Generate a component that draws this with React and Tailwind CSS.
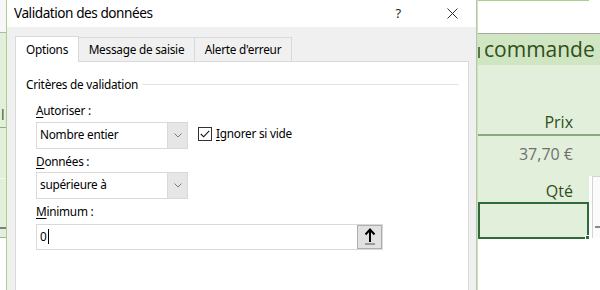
import React from 'react';

const ui = { fontFamily: '"Noto Sans", "Open Sans", sans-serif' };
const xl = { fontFamily: '"Open Sans", "Noto Sans", sans-serif' };

const Chevron = () => (
  <svg width="8" height="5" viewBox="0 0 8 5" fill="none">
    <path d="M0.5 0.5 L4 4 L7.5 0.5" stroke="#7a7a7a" strokeWidth="1" />
  </svg>
);

const SelectBox = ({ value }) => (
  <div className="flex h-[27px] w-[152px] border border-[#d9d9d9] bg-white">
    <div className="flex flex-1 items-center pl-[3px] text-black">{value}</div>
    <div className="flex w-[20px] items-center justify-center border-l border-[#d9d9d9] bg-[#e6e6e6]">
      <Chevron />
    </div>
  </div>
);

const LeftStrip = () => (
  <div className="flex w-[6px] shrink-0 flex-col">
    <div className="h-[33px] border-b border-[#b5b5b5] bg-[#f7f7f7]" />
    <div className="h-[94px] bg-[#e2efda] pl-[1px] pt-[75px] text-[14px] leading-none text-[#375623]" style={xl}>
      l
    </div>
    <div className="h-[51px] border-t border-[#8faa7c] bg-[#e2efda]" />
    <div className="h-[49px] border-t border-[#f4f9f1] bg-[#e2efda]" />
    <div className="h-[10px] border-t-2 border-[#7f7f7f] bg-[#e2efda]" />
    <div className="flex-1 border-t border-[#9fb88f] bg-white" />
  </div>
);

const Tab = ({ label, active, width }) => (
  <div
    className={
      active
        ? 'relative z-10 -mb-px flex h-[26px] items-center justify-center border border-b-0 border-[#d9d9d9] bg-white text-black'
        : 'mt-[1px] flex h-[24px] items-center justify-center border border-l-0 border-b-0 border-[#d9d9d9] bg-[#f0f0f0] text-black'
    }
    style={{ width }}
  >
    {label}
  </div>
);

const Dialog = () => (
  <div
    className="flex h-[290px] w-[471px] shrink-0 flex-col border-x border-[#a9d08e] bg-[#f0f0f0] text-[11.8px] tracking-[-0.25px]"
    style={ui}
  >
    {/* title bar */}
    <div className="flex h-[27px] items-center bg-white">
      <span className="pl-[7px] text-[13.6px] tracking-[-0.45px] text-black">Validation des données</span>
      <span className="ml-auto mr-[46px] text-[13px] text-[#222]">?</span>
      <svg width="11" height="11" viewBox="0 0 11 11" className="mr-[18px]">
        <path d="M0.5 0.5 L10.5 10.5 M10.5 0.5 L0.5 10.5" stroke="#333" strokeWidth="1" />
      </svg>
    </div>

    {/* tabs */}
    <div className="flex items-end pl-[8px] pt-[9px]">
      <Tab label="Options" active width="64px" />
      <Tab label="Message de saisie" width="116px" />
      <Tab label="Alerte d'erreur" width="97px" />
    </div>

    {/* panel */}
    <div className="ml-[8px] mr-[7px] flex flex-1 flex-col border border-b-0 border-[#d9d9d9] bg-white">
      <div className="flex items-center pl-[10px] pr-[9px] pt-[14px]">
        <span className="text-black">Critères de validation</span>
        <div className="ml-[4px] h-px flex-1 bg-[#e3e3e3]" />
      </div>

      <div className="flex flex-col pl-[20px] text-black">
        <div className="mt-[7px] leading-[18px]">
          <span className="underline underline-offset-2">A</span>utoriser :
        </div>
        <div className="mt-[3px] flex items-start">
          <SelectBox value="Nombre entier" />
          <div className="ml-[10px] mt-[3px] flex items-center">
            <div className="flex h-[14px] w-[14px] items-center justify-center border border-[#333] bg-white">
              <svg width="10" height="8" viewBox="0 0 10 8" fill="none">
                <path d="M0.8 4 L3.6 6.8 L9.2 0.8" stroke="#111" strokeWidth="1.1" />
              </svg>
            </div>
            <span className="ml-[4px]">
              <span className="underline underline-offset-2">I</span>gnorer si vide
            </span>
          </div>
        </div>

        <div className="mt-[3px] leading-[18px]">
          <span className="underline underline-offset-2">D</span>onnées :
        </div>
        <div className="mt-[2px]">
          <SelectBox value="supérieure à" />
        </div>

        <div className="mt-[3px] leading-[18px]">
          <span className="underline underline-offset-2">M</span>inimum :
        </div>
        <div className="mt-[4px] flex h-[26px] w-[347px] border border-[#d9d9d9] bg-white">
          <div className="flex flex-1 items-center pl-[3px]">
            0<span className="ml-px h-[15px] w-px bg-black" />
          </div>
          <div className="flex w-[25px] items-center justify-center border border-[#adadad] bg-[#e1e1e1]">
            <svg width="12" height="17" viewBox="0 0 12 17" fill="none">
              <path d="M6 2 L6 14" stroke="#000" strokeWidth="2" />
              <path d="M1.5 6.5 L6 1.5 L10.5 6.5" stroke="#000" strokeWidth="2" />
              <path d="M1 16 L11 16" stroke="#555" strokeWidth="1" />
            </svg>
          </div>
        </div>
      </div>
    </div>
  </div>
);

const Sheet = () => (
  <div className="flex h-[290px] flex-1 flex-col overflow-hidden" style={xl}>
    <div className="h-[34px] border-b border-[#a6a6a6] bg-white">
      <div className="h-px w-[111px] bg-[#a9d08e]" />
    </div>
    <div className="flex h-[31px] items-center bg-[#d0e5c2] text-[21px] text-[#2f4f1c]">
      <div className="mb-[7px] h-[11px] w-[2px] self-end bg-[#5a7847]" />
      <span className="ml-[4px] whitespace-nowrap">commande</span>
    </div>
    <div className="flex h-[71px] items-end border-b-2 border-[#8eaa7a] bg-[#e2efda]">
      <div className="w-[111px] pb-[1px] pr-[16px] text-right text-[16px] leading-[22px] text-[#2f4f1c]">Prix</div>
    </div>
    <div className="flex h-[40px] items-start bg-[#e2efda]">
      <div className="w-[111px] pr-[16px] pt-[7px] text-right text-[16px] leading-[22px] text-[#6f6f6f]">37,70 €</div>
    </div>
    <div className="flex flex-1">
      <div className="flex w-[111px] flex-col">
        <div className="h-[26px] bg-[#e2efda] pr-[16px] pt-[2px] text-right text-[16px] leading-[26px] text-[#2f4f1c]">Qté</div>
        <div className="relative h-[37px] border-2 border-[#2f6b3a] bg-[#e2efda]">
          <div className="absolute -bottom-[3px] -right-[3px] h-[5px] w-[5px] border border-white bg-[#2f6b3a]" />
        </div>
        <div className="flex-1 bg-white" />
      </div>
      <div className="ml-[3px] flex flex-1 flex-col">
        <div className="h-[62px] border-l border-t border-[#d4d4d4] bg-[#fbfbfb] pt-[49px]">
          <div className="ml-[2px] h-[2px] w-full bg-[#8a8a8a]" />
        </div>
        <div className="flex-1 bg-white" />
      </div>
    </div>
  </div>
);

export default function App() {
  return (
    <div className="flex h-[290px] w-[600px] overflow-hidden bg-white">
      <LeftStrip />
      <Dialog />
      <div className="w-px shrink-0 bg-[#d8d8d8]" />
      <Sheet />
    </div>
  );
}
